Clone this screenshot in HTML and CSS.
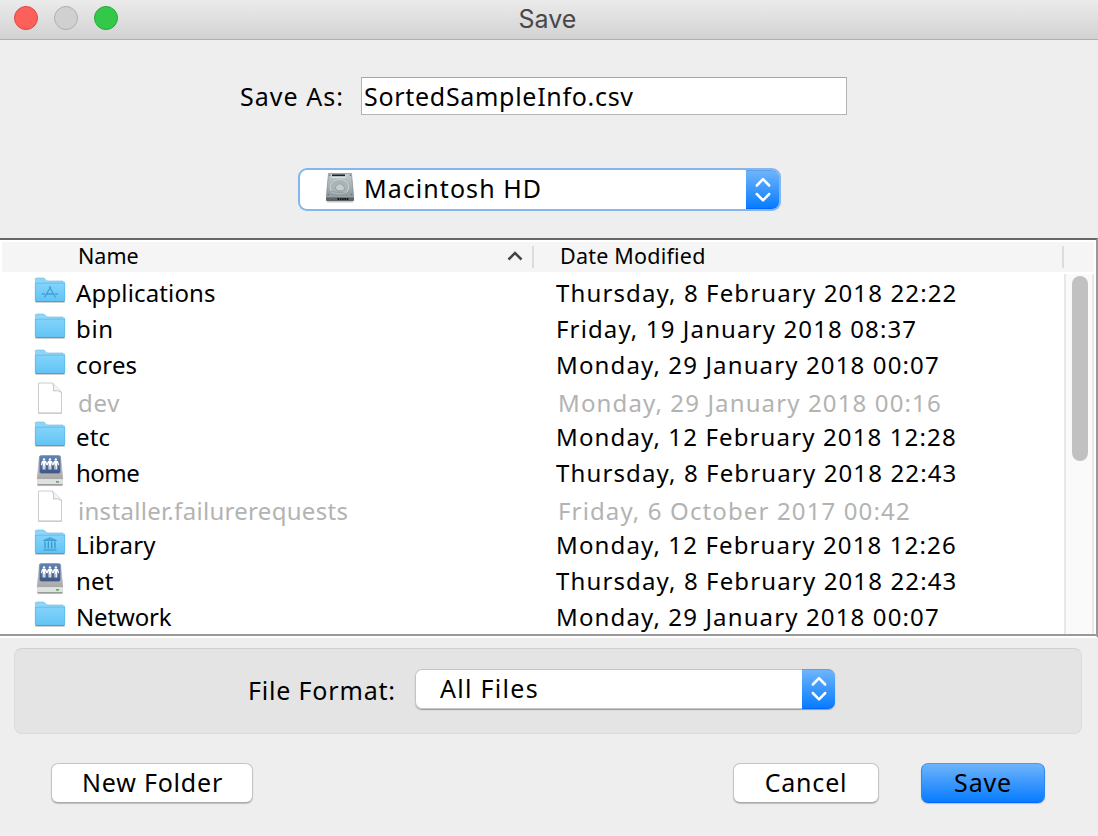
FILE: index.html
```
<!DOCTYPE html>
<html lang="en">
<head>
<meta charset="utf-8">
<title>Save</title>
<link rel="stylesheet" href="styles.css">
</head>
<body>
<svg class="defs" width="0" height="0" aria-hidden="true">
  <defs>
    <linearGradient id="gFolder" x1="0" y1="0" x2="0" y2="1"><stop offset="0" stop-color="#83d4fb"/><stop offset="1" stop-color="#61c3f4"/></linearGradient>
    <linearGradient id="gScreen" x1="0" y1="0" x2="0" y2="1"><stop offset="0" stop-color="#6385b3"/><stop offset="1" stop-color="#3c5685"/></linearGradient>
    <linearGradient id="gMetal" x1="0" y1="0" x2="0" y2="1"><stop offset="0" stop-color="#dcdcdc"/><stop offset="1" stop-color="#9b9b9b"/></linearGradient>
    <linearGradient id="gDisk" x1="0" y1="0" x2="0" y2="1"><stop offset="0" stop-color="#c3cccf"/><stop offset="1" stop-color="#8d989c"/></linearGradient>
    <symbol id="folder" viewBox="0 0 32 36">
      <path d="M1.500 28.500H30.500" stroke="#000" opacity=".18"/>
      <path d="M1 6Q1 4 3 4H9Q10.500 4 11.500 5.500T14 7H29Q31 7 31 9V15H1z" fill="#8fd5f8"/>
      <path d="M1 6Q1 4 3 4H9Q10.500 4 11.500 5.500T14 7H29" fill="none" stroke="#68b9e2" stroke-width=".6"/>
      <path d="M1 9H31V26.500Q31 28 29.500 28H2.500Q1 28 1 26.500z" fill="url(#gFolder)"/>
      <path d="M1 9.200H31" stroke="#5fb9e9" stroke-width=".8"/>
      <path d="M1.500 27.500H30.500" stroke="#449fce" stroke-width=".9"/>
      <path d="M1.300 9V26.500M30.700 9V26.500" stroke="#56b2df" stroke-width=".6"/>
    </symbol>
    <symbol id="doc" viewBox="0 0 32 36">
      <path d="M4.500 31V1H18.500L27.500 10V31z" fill="#fff" stroke="#cdcdcd"/>
      <path d="M18.500 1.200Q20.500 5 19.500 9Q23.500 7.500 27.500 10.500" fill="#f5f5f5" stroke="#c4c4c4"/>
      <path d="M4 31.300H28" stroke="#bdbdbd" stroke-width=".8"/>
    </symbol>
    <symbol id="man" viewBox="0 0 6 13" overflow="visible">
      <circle cx="3" cy="1.500" r="1.300"/>
      <path d="M1.800 3H4.200Q5.300 3 5.800 4.500L6.500 7.500L5.500 7.800L4.500 5.200V12.500H3.300V8.500H2.700V12.500H1.500V5.200L.5 7.800L-.5 7.500L.2 4.500Q.7 3 1.800 3z"/>
    </symbol>
    <symbol id="server" viewBox="0 0 32 36">
      <path d="M3.500 31.300H28.500" stroke="#888" stroke-width="1.500" opacity=".6"/>
      <path d="M5.500 1.500H26.500L29 25V29Q29 30.500 27.500 30.500H4.500Q3 30.500 3 29V25z" fill="url(#gMetal)"/>
      <path d="M5.500 2L3.300 25M26.500 2L28.700 25" stroke="#b4b4b4" stroke-width=".7"/>
      <rect x="5.500" y="1.500" width="21" height="18" rx="2" fill="url(#gScreen)" stroke="#8497b5" stroke-width=".7"/>
      <path d="M3 25.500H29V29Q29 30.500 27.500 30.500H4.500Q3 30.500 3 29z" fill="#dde1df"/>
      <path d="M3.500 25.700H28.500" stroke="#f5f5f5" stroke-width=".7"/>
      <path d="M3.500 30.500H28.500" stroke="#8f8f8f" stroke-width=".8"/>
      <rect x="22" y="27" width="3" height="1.700" fill="#62ad68"/>
      <g fill="#fff"><use href="#man" x="7.300" y="4" width="5.500" height="12"/><use href="#man" x="13.200" y="4" width="5.500" height="12"/><use href="#man" x="19.100" y="4" width="5.500" height="12"/></g>
    </symbol>
    <symbol id="updown" viewBox="0 0 16 26">
      <path d="M1.800 8.500L8 2.200L14.200 8.500M1.800 17L8 23.300L14.200 17" fill="none" stroke="#fff" stroke-width="2.500" stroke-linecap="round" stroke-linejoin="round"/>
    </symbol>
  </defs>
</svg>
<div class="window">
  <header class="titlebar">
    <div class="lights"><i class="light red"></i><i class="light gray"></i><i class="light green"></i></div>
    <span class="title">Save</span>
  </header>

  <div class="save-as">
    <span class="label">Save As:</span>
    <div class="field"><span>SortedSampleInfo.csv</span></div>
  </div>

  <div class="location">
    <div class="combo focused">
      <div class="combo-body">
        <svg class="disk" viewBox="0 0 30 32">
          <path d="M2 29.500H28" stroke="#777" stroke-width="2" opacity=".4"/>
          <path d="M3.500 1.500H26.500L28.700 25H1.300z" fill="url(#gDisk)" stroke="#818a8d" stroke-width=".7"/>
          <path d="M1 24.500H29V28Q29 29 28 29H2Q1 29 1 28z" fill="#5b6467"/>
          <path d="M1 24.800H29" stroke="#aab4b7"/>
          <rect x="6.500" y="2.300" width="14" height="3.700" fill="#dce2e4"/><path d="M7 3.300H20" stroke="#222" stroke-width="1.800"/>
          <path d="M6 19Q3.500 12 9 9Q15 5.500 21 9.500Q26 14 22 20" fill="#a9b4b7" stroke="#c9d2d4" stroke-width=".9"/>
          <path d="M10.500 17Q10 14.500 12.500 12.500Q15 10.500 17.500 13Q20 15 19.500 17.500Q15 20.500 10.500 17z" fill="#c3ccd0" stroke="#8a9599" stroke-width=".7"/>
          <path d="M6 20Q15 24 23 19.500" fill="none" stroke="#b9c3c6" stroke-width=".8"/>
          <path d="M12.500 27H23.500" stroke="#111" stroke-width="2" stroke-dasharray="1.500 .8"/>
          <g fill="#5e696d"><circle cx="4.800" cy="3.200" r=".7"/><circle cx="25.300" cy="3.200" r=".7"/><circle cx="3.300" cy="22.500" r=".7"/><circle cx="26.500" cy="22.500" r=".7"/></g>
        </svg>
        <span class="control-text">Macintosh HD</span>
      </div>
      <div class="combo-arrow"><svg><use href="#updown"/></svg></div>
    </div>
  </div>

  <div class="browser">
    <div class="columns">
      <div class="col-name"><span>Name</span><svg class="sort" viewBox="0 0 16 10"><path d="M1.500 8.500L8 2L14.500 8.500" fill="none" stroke="#444" stroke-width="2.500"/></svg></div>
      <div class="col-date"><span>Date Modified</span></div>
    </div>
    <div class="list">
      <div class="rows">
        <div class="row"><svg class="icon"><use href="#folder"/><g fill="none" stroke="#3fa0d5" stroke-width="1.300"><path d="M16.800 12.500L10.500 23.500M15.200 12.500L21.500 23.500"/><path d="M8 20H24" stroke-dasharray="3 1 8 1"/></g></svg><span class="name">Applications</span><span class="date">Thursday, 8 February 2018 22:22</span></div>
        <div class="row"><svg class="icon"><use href="#folder"/></svg><span class="name loose">bin</span><span class="date">Friday, 19 January 2018 08:37</span></div>
        <div class="row"><svg class="icon"><use href="#folder"/></svg><span class="name">cores</span><span class="date">Monday, 29 January 2018 00:07</span></div>
        <div class="row off"><svg class="icon"><use href="#doc"/></svg><span class="name loose">dev</span><span class="date">Monday, 29 January 2018 00:16</span></div>
        <div class="row"><svg class="icon"><use href="#folder"/></svg><span class="name">etc</span><span class="date">Monday, 12 February 2018 12:28</span></div>
        <div class="row"><svg class="icon"><use href="#server"/></svg><span class="name tight">home</span><span class="date">Thursday, 8 February 2018 22:43</span></div>
        <div class="row off"><svg class="icon"><use href="#doc"/></svg><span class="name">installer.failurerequests</span><span class="date">Friday, 6 October 2017 00:42</span></div>
        <div class="row"><svg class="icon"><use href="#folder"/><g fill="none" stroke="#3594c9"><path d="M9.500 14.500H22.500L16 11.700z" fill="#4aabdc" stroke-width=".8"/><path d="M11 15.500V22.500M14.300 15.500V22.500M17.700 15.500V22.500M21 15.500V22.500M9.500 24H22.500" stroke-width="1.200"/></g></svg><span class="name">Library</span><span class="date">Monday, 12 February 2018 12:26</span></div>
        <div class="row"><svg class="icon"><use href="#server"/></svg><span class="name">net</span><span class="date">Thursday, 8 February 2018 22:43</span></div>
        <div class="row"><svg class="icon"><use href="#folder"/></svg><span class="name">Network</span><span class="date">Monday, 29 January 2018 00:07</span></div>
      </div>
      <div class="scrollbar"><div class="thumb"></div></div>
    </div>
  </div>

  <div class="format">
    <span class="label format-label">File Format:</span>
    <div class="combo">
      <div class="combo-body"><span class="control-text">All Files</span></div>
      <div class="combo-arrow"><svg><use href="#updown"/></svg></div>
    </div>
  </div>

  <footer class="actions">
    <div class="button new-folder">New Folder</div>
    <div class="button cancel">Cancel</div>
    <div class="button primary">Save</div>
  </footer>
</div>
</body>
</html>
```
FILE: styles.css
```
* { box-sizing: border-box; }
body { margin: 0; background: #eee; font-family: "Noto Sans", "Lucida Grande", sans-serif; font-size: 25px; color: #000; }
.defs { display: block; height: 0; }
.window { width: 1098px; height: 836px; display: flex; flex-direction: column; overflow: hidden; white-space: nowrap; }
svg { flex: none; }

.titlebar { height: 40px; display: grid; grid-template-columns: 1fr auto 1fr; background: linear-gradient(#ebebeb, #d2d2d2); border-bottom: 1px solid #b0b0b0; }
.lights { display: flex; gap: 16px; padding: 6px 0 0 14px; }
.light { width: 24px; height: 24px; border-radius: 50%; border: 1px solid; }
.red { background: #fc605b; border-color: #df4744; }
.gray { background: #d0d0d0; border-color: #b0b0b0; }
.green { background: #34c84a; border-color: #26a934; }
.title { font: 25px/38px Inter, sans-serif; color: #484848; padding-right: 3px; }

.save-as { height: 38px; margin-top: 37px; display: flex; padding-left: 240px; line-height: 38px; }
.label { width: 121px; letter-spacing: 1.05px; }
.field { width: 486px; background: #fff; border: 1px solid #b4b4b4; border-top-color: #a6a6a6; padding-left: 2px; line-height: 36px; letter-spacing: .7px; }

.location { display: flex; margin: 54px 0 0 300px; height: 40px; }
.combo { display: flex; height: 40px; border-radius: 7px; background: #fff; box-shadow: 0 0 0 1px #c4c4c4 inset, 0 1px 1px #0005; width: 420px; }
.combo-body { flex: 1; display: flex; align-items: center; padding: 0 0 2px 25px; line-height: 38px; }
.focused { width: 479px; height: 39px; margin-top: 1px; box-shadow: 0 0 0 2px #85b6ed; }
.focused .combo-body { padding-bottom: 3px; }
.disk { width: 30px; height: 32px; }
.focused .control-text { margin-left: 9px; padding-bottom: 1px; letter-spacing: 1.05px; }
.combo-arrow { width: 33px; border-radius: 0 7px 7px 0; background: linear-gradient(#6eb4fb, #077cff); border-top: 1px solid #5da1ec; border-bottom: 1px solid #0067ff; display: grid; place-items: center; }
.combo-arrow svg { width: 16px; height: 26px; }

.browser { margin-top: 29px; height: 400px; border-top: 2px solid #666; border-right: 2px solid #999; background: #fff; padding-top: 2px; display: flex; flex-direction: column; border-bottom: 2px solid #fff; }
.columns { margin: 0 2px; height: 30px; background: #f5f5f5; display: flex; align-items: center; font-size: 21.5px; line-height: 28px; }
.columns span { padding-bottom: 2px; }
.col-name { width: 532px; height: 22px; display: flex; align-items: center; padding: 0 9px 0 76px; justify-content: space-between; border-right: 2px solid #dcdcdc; }
.col-date { width: 530px; height: 22px; display: flex; align-items: center; padding-left: 26px; border-right: 2px solid #dcdcdc; letter-spacing: .22px; }
.sort { width: 16px; height: 10px; margin-bottom: 2px; }
.list { flex: 1; display: flex; border-bottom: 2px solid #999; margin-right: -2px; padding: 2px 4px 0 0; }
.rows { width: 1064px; font-size: 24px; line-height: 36px; }
.row { height: 36px; display: flex; padding: 0 0 0 34px; }
.icon { width: 32px; height: 36px; margin-right: 10px; }
.name { width: 480px; height: 36px; line-height: 37px; letter-spacing: .15px; }
.name.tight { letter-spacing: -.5px; }
.name:last-of-type { letter-spacing: .1px; }
.date { height: 36px; line-height: 37px; letter-spacing: 1.13px; }
.off { color: #b3b3b3; }
.off .name { letter-spacing: .3px; padding: 2px 0 0 2px; }
.off .date { padding: 2px 0 0 2px; }
.row .name.loose { letter-spacing: .7px; }
.row:last-child .name { letter-spacing: -.15px; }
.scrollbar { flex: 1; background: #fafafa; border: solid #e8e8e8; border-width: 0 2px; padding: 2px 4px 0 6px; }
.thumb { height: 185px; border-radius: 8px; background: #c1c1c1; }

.format { margin: 10px 16px 0 14px; height: 86px; border: 1px solid #dbdbdb; border-top-color: #d0d0d0; border-radius: 8px; background: #e4e4e4; padding: 20px 0 0 233px; display: flex; line-height: 42px; }
.format-label { width: 167px; letter-spacing: .82px; }
.format .control-text { letter-spacing: 1.3px; }

.actions { display: flex; padding: 29px 0 0 51px; }
.button { height: 40px; border-radius: 7px; background: #fff; border: 1px solid #c4c4c4; border-bottom-color: #aaa; box-shadow: 0 1px 1px #0003; text-align: center; line-height: 36px; letter-spacing: .8px; }
.new-folder { width: 202px; padding-left: 1px; }
.cancel { width: 146px; margin-left: 480px; }
.primary { width: 124px; margin-left: 42px; background: linear-gradient(#6eb4fb, #077cff); border-color: #4c98ec #2886f5 #0067ff; }
```
